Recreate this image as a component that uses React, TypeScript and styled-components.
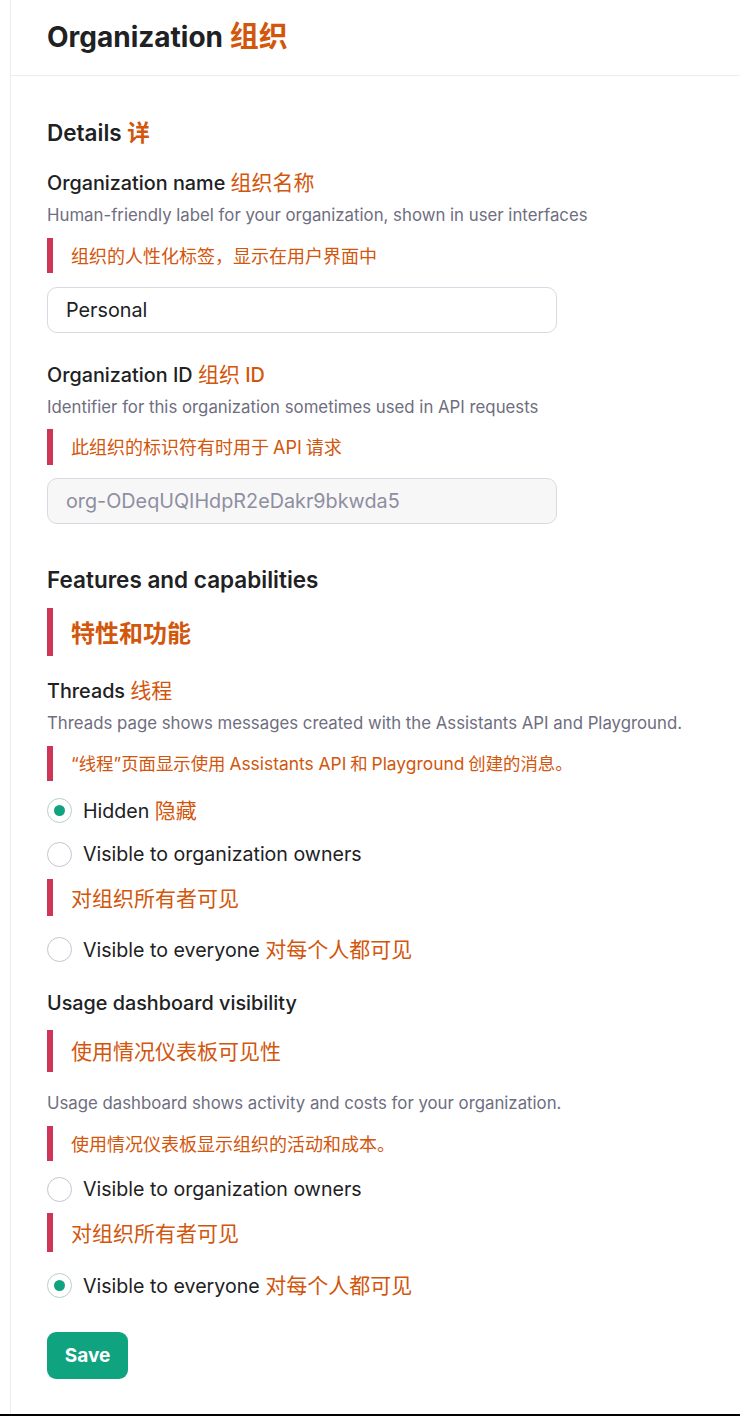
import React, { useState } from "react";
import styled, { createGlobalStyle } from "styled-components";

const GlobalStyle = createGlobalStyle`
  html, body {
    margin: 0;
    padding: 0;
    background: #ffffff;
  }
  body {
    font-family: "Inter", "Noto Sans CJK SC", sans-serif;
    color: #202123;
    -webkit-font-smoothing: antialiased;
  }
`;

const Page = styled.div`
  display: flex;
  flex-direction: column;
  height: 1416px;
  box-sizing: border-box;
  border-bottom: 2px solid #000000;
`;

const Panel = styled.div`
  flex: 1;
  margin-left: 10px;
  border-left: 1px solid #ececf1;
  display: flex;
  flex-direction: column;
`;

const Header = styled.div`
  height: 76px;
  box-sizing: border-box;
  padding: 16px 36px 0;
  border-bottom: 1px solid #ececf1;
`;

const PageTitle = styled.h1`
  margin: 0;
  height: 36px;
  font-size: 28px;
  line-height: 36px;
  font-weight: 700;
  color: #202123;
  white-space: nowrap;
`;

const Body = styled.div`
  padding: 0 36px;
  display: flex;
  flex-direction: column;
  align-items: flex-start;
`;

const Zh = styled.span<{ $bold?: boolean; $size?: number }>`
  color: #d2560c;
  font-family: "Noto Sans CJK SC", "Inter", sans-serif;
  font-weight: ${(p) => (p.$bold ? 700 : 400)};
  ${(p) => (p.$size ? `font-size: ${p.$size}px;` : "")}
`;

const ZhLatin = styled.span`
  color: #d2560c;
  font-family: "Inter", sans-serif;
`;

const SectionTitle = styled.h2<{ $mt: number }>`
  margin: ${(p) => p.$mt}px 0 0;
  height: 28px;
  font-size: 22.5px;
  line-height: 28px;
  font-weight: 600;
  color: #202123;
  white-space: nowrap;
`;

const Label = styled.div<{ $mt: number }>`
  margin-top: ${(p) => p.$mt}px;
  height: 26px;
  font-size: 19.8px;
  line-height: 26px;
  font-weight: 500;
  color: #202123;
  white-space: nowrap;
`;

const Desc = styled.div<{ $mt: number }>`
  margin-top: ${(p) => p.$mt}px;
  height: 22px;
  font-size: 16.8px;
  line-height: 22px;
  color: #6e6e80;
  white-space: nowrap;
`;

const Note = styled.div<{ $mt: number; $h: number; $size: number; $bold?: boolean }>`
  margin-top: ${(p) => p.$mt}px;
  height: ${(p) => p.$h}px;
  box-sizing: border-box;
  border-left: 6px solid #cf3557;
  padding-left: 18px;
  display: flex;
  align-items: center;
  font-size: ${(p) => p.$size}px;
  font-weight: ${(p) => (p.$bold ? 700 : 400)};
  color: #d2560c;
  font-family: "Noto Sans CJK SC", "Inter", sans-serif;
  white-space: nowrap;
`;

const NoteText = styled.span`
  line-height: 1.2;
`;

const Latin = styled.span`
  font-family: "Inter", sans-serif;
`;

const Input = styled.input<{ $mt: number }>`
  margin-top: ${(p) => p.$mt}px;
  width: 510px;
  height: 46px;
  box-sizing: border-box;
  border: 1px solid #d9d9e3;
  border-radius: 10px;
  padding: 0 18px;
  font-family: "Inter", sans-serif;
  font-size: 19.8px;
  color: #202123;
  background: #ffffff;
  outline: none;

  &:disabled {
    background: #f7f7f8;
    color: #8e8ea0;
  }
`;

const RadioRow = styled.label<{ $mt: number }>`
  margin-top: ${(p) => p.$mt}px;
  height: 30px;
  display: flex;
  align-items: center;
  gap: 11px;
  font-size: 19.6px;
  color: #202123;
  cursor: pointer;
  white-space: nowrap;
`;

const RadioCircle = styled.span<{ $checked: boolean }>`
  width: 25px;
  height: 25px;
  flex-shrink: 0;
  box-sizing: border-box;
  border-radius: 50%;
  border: 1.5px solid ${(p) => (p.$checked ? "#b4d2cc" : "#c5c5d2")};
  display: flex;
  align-items: center;
  justify-content: center;

  &::after {
    content: "";
    width: 11px;
    height: 11px;
    border-radius: 50%;
    background: ${(p) => (p.$checked ? "#10a37f" : "transparent")};
  }
`;

const RadioText = styled.span`
  line-height: 30px;
`;

const SaveButton = styled.button<{ $mt: number }>`
  margin-top: ${(p) => p.$mt}px;
  width: 81px;
  height: 47px;
  border: none;
  border-radius: 9px;
  background: #10a37f;
  color: #ffffff;
  font-family: "Inter", sans-serif;
  font-size: 19px;
  font-weight: 700;
  cursor: pointer;
`;

interface RadioProps {
  mt: number;
  checked: boolean;
  onSelect: () => void;
  children: React.ReactNode;
}

function Radio({ mt, checked, onSelect, children }: RadioProps) {
  return (
    <RadioRow $mt={mt} onClick={onSelect}>
      <RadioCircle $checked={checked} />
      <RadioText>{children}</RadioText>
    </RadioRow>
  );
}

export default function App() {
  const [threads, setThreads] = useState<string>("hidden");
  const [usage, setUsage] = useState<string>("everyone");
  const [name, setName] = useState<string>("Personal");

  return (
    <Page>
      <GlobalStyle />
      <Panel>
        <Header>
          <PageTitle>
            Organization <Zh $bold $size={29}>组织</Zh>
          </PageTitle>
        </Header>
        <Body>
          <SectionTitle $mt={41}>
            Details <Zh $bold>详</Zh>
          </SectionTitle>

          <Label $mt={23}>
            Organization name <Zh $size={21}>组织名称</Zh>
          </Label>
          <Desc $mt={10}>
            Human-friendly label for your organization, shown in user interfaces
          </Desc>
          <Note $mt={12} $h={35} $size={18}>
            <NoteText>组织的人性化标签，显示在用户界面中</NoteText>
          </Note>
          <Input $mt={14} value={name} onChange={(e) => setName(e.target.value)} />

          <Label $mt={27}>
            Organization ID <Zh $size={21}>组织</Zh> <ZhLatin>ID</ZhLatin>
          </Label>
          <Desc $mt={10}>Identifier for this organization sometimes used in API requests</Desc>
          <Note $mt={11} $h={36} $size={18}>
            <NoteText>
              此组织的标识符有时用于 <Latin>API</Latin> 请求
            </NoteText>
          </Note>
          <Input $mt={13} value="org-ODeqUQIHdpR2eDakr9bkwda5" disabled readOnly />

          <SectionTitle $mt={42}>Features and capabilities</SectionTitle>
          <Note $mt={14} $h={48} $size={24} $bold>
            <NoteText>特性和功能</NoteText>
          </Note>

          <Label $mt={20}>
            Threads <Zh $size={21}>线程</Zh>
          </Label>
          <Desc $mt={10}>
            Threads page shows messages created with the Assistants API and Playground.
          </Desc>
          <Note $mt={12} $h={35} $size={17.4}>
            <NoteText>
              <Latin>“</Latin>线程<Latin>”</Latin>页面显示使用 <Latin>Assistants API</Latin> 和{" "}
              <Latin>Playground</Latin> 创建的消息。
            </NoteText>
          </Note>
          <Radio mt={14} checked={threads === "hidden"} onSelect={() => setThreads("hidden")}>
            Hidden <Zh $size={21}>隐藏</Zh>
          </Radio>
          <Radio mt={14} checked={threads === "owners"} onSelect={() => setThreads("owners")}>
            Visible to organization owners
          </Radio>
          <Note $mt={10} $h={37} $size={21}>
            <NoteText>对组织所有者可见</NoteText>
          </Note>
          <Radio mt={18} checked={threads === "everyone"} onSelect={() => setThreads("everyone")}>
            Visible to everyone <Zh $size={21}>对每个人都可见</Zh>
          </Radio>

          <Label $mt={26}>Usage dashboard visibility</Label>
          <Note $mt={14} $h={42} $size={21}>
            <NoteText>使用情况仪表板可见性</NoteText>
          </Note>
          <Desc $mt={20}>Usage dashboard shows activity and costs for your organization.</Desc>
          <Note $mt={12} $h={35} $size={18}>
            <NoteText>使用情况仪表板显示组织的活动和成本。</NoteText>
          </Note>
          <Radio mt={13} checked={usage === "owners"} onSelect={() => setUsage("owners")}>
            Visible to organization owners
          </Radio>
          <Note $mt={9} $h={39} $size={21}>
            <NoteText>对组织所有者可见</NoteText>
          </Note>
          <Radio mt={18} checked={usage === "everyone"} onSelect={() => setUsage("everyone")}>
            Visible to everyone <Zh $size={21}>对每个人都可见</Zh>
          </Radio>

          <SaveButton $mt={32}>Save</SaveButton>
        </Body>
      </Panel>
    </Page>
  );
}
